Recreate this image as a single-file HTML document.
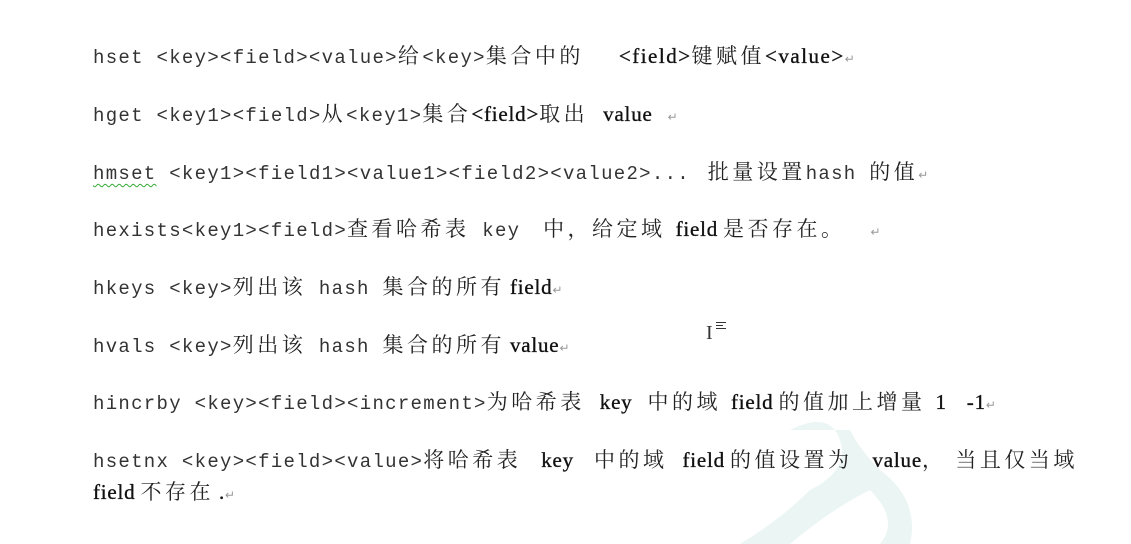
<!DOCTYPE html>
<html><head><meta charset="utf-8"><style>
body{margin:0;width:1131px;height:544px;background:#fff;position:relative;overflow:hidden;color:#222;}
.l{position:absolute;left:93px;white-space:nowrap;font-size:20px;line-height:24px;font-family:"Liberation Serif","Noto Serif CJK SC",serif;}
.m{font-family:"Liberation Mono",monospace;font-size:19px;letter-spacing:1.3px;color:#333}
.s{font-family:"Liberation Serif",serif;font-size:21px;letter-spacing:0.8px;color:#111;-webkit-text-stroke:0.35px #111}
.c{font-family:"Noto Serif CJK SC","Noto Sans CJK SC",serif;font-size:21px;letter-spacing:3.5px;color:#222}
.r{color:#999;font-size:12px;font-family:"Liberation Sans",sans-serif}
.u{text-decoration:underline wavy #3a3;text-underline-offset:4px;text-decoration-thickness:1px}
</style></head><body>
<svg style="position:absolute;left:700px;top:410px" width="220" height="134"><path d="M90 20 Q130 0 140 30 Q150 60 110 80 Q80 110 40 134 L90 134 Q130 100 170 80 Q200 110 180 134 L210 134 Q220 90 180 60 Q160 40 150 20 Z" fill="#eaf5f4"/></svg>
<div class="l" style="top:43px"><span class="m">hset &lt;key&gt;&lt;field&gt;&lt;value&gt;</span><span class="c">给</span><span class="m">&lt;key&gt;</span><span class="c">集合中的</span>&nbsp;&nbsp;&nbsp;&nbsp;&nbsp;&nbsp;&nbsp;<span class="s" style="letter-spacing:1.5px">&lt;field&gt;</span><span class="c">键赋值</span><span class="s" style="letter-spacing:1.5px">&lt;value&gt;</span><span class="r">↵</span></div>
<div class="l" style="top:101px"><span class="m">hget &lt;key1&gt;&lt;field&gt;</span><span class="c">从</span><span class="m">&lt;key1&gt;</span><span class="c">集合</span><span class="s">&lt;field&gt;</span><span class="c">取出</span>&nbsp;&nbsp;&nbsp;<span class="s">value</span>&nbsp;&nbsp;&nbsp;<span class="r">↵</span></div>
<div class="l" style="top:159px"><span class="m"><span class="u">hmset</span> &lt;key1&gt;&lt;field1&gt;&lt;value1&gt;&lt;field2&gt;&lt;value2&gt;... </span>&nbsp;<span class="c">批量设置</span><span class="m">hash </span><span class="c">的值</span><span class="r">↵</span></div>
<div class="l" style="top:216px"><span class="m">hexists&lt;key1&gt;&lt;field&gt;</span><span class="c">查看哈希表</span><span class="m"> key </span>&nbsp;&nbsp;<span class="c">中，给定域</span>&nbsp;&nbsp;<span class="s">field</span> <span class="c">是否存在。</span>&nbsp;&nbsp;&nbsp;&nbsp;&nbsp;<span class="r">↵</span></div>
<div class="l" style="top:274px"><span class="m">hkeys &lt;key&gt;</span><span class="c">列出该</span><span class="m"> hash </span><span class="c">集合的所有</span> <span class="s">field</span><span class="r">↵</span></div>
<div class="l" style="top:332px"><span class="m">hvals &lt;key&gt;</span><span class="c">列出该</span><span class="m"> hash </span><span class="c">集合的所有</span> <span class="s">value</span><span class="r">↵</span></div>
<div class="l" style="top:389px"><span class="m">hincrby &lt;key&gt;&lt;field&gt;&lt;increment&gt;</span><span class="c">为哈希表</span>&nbsp;&nbsp;&nbsp;<span class="s">key</span>&nbsp;&nbsp;&nbsp;<span class="c">中的域</span>&nbsp;&nbsp;<span class="s">field</span> <span class="c">的值加上增量</span>&nbsp;&nbsp;<span class="s">1</span>&nbsp;&nbsp;&nbsp;&nbsp;<span class="s">-1</span><span class="r">↵</span></div>
<div class="l" style="top:447px"><span class="m">hsetnx &lt;key&gt;&lt;field&gt;&lt;value&gt;</span><span class="c">将哈希表</span>&nbsp;&nbsp;&nbsp;&nbsp;<span class="s">key</span>&nbsp;&nbsp;&nbsp;&nbsp;<span class="c">中的域</span>&nbsp;&nbsp;&nbsp;<span class="s">field</span> <span class="c">的值设置为</span>&nbsp;&nbsp;&nbsp;&nbsp;<span class="s">value</span><span class="c">，&nbsp;当且仅当域</span></div>
<div class="l" style="top:479px"><span class="s">field</span> <span class="c">不存在</span>&nbsp;<span class="s">.</span><span class="r">↵</span></div>
<div style="position:absolute;left:706px;top:322px;font:20px 'Liberation Serif',serif;color:#333">I</div>
<div style="position:absolute;left:716px;top:322px;width:10px;height:5px;border-top:1px solid #333;border-bottom:1px solid #333"></div>
<div style="position:absolute;left:716px;top:325px;width:7px;border-top:1px solid #333"></div>
</body></html>
